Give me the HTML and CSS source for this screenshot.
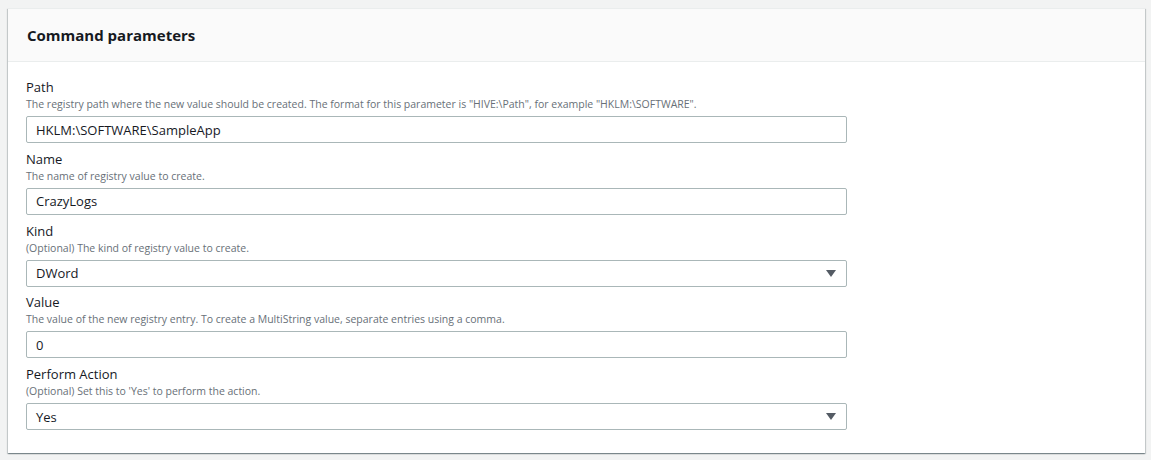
FILE: index.html
```html
<!DOCTYPE html>
<html>
<head>
<meta charset="utf-8">
<link rel="stylesheet" href="styles.css">
</head>
<body>
<div class="card">
  <div class="card-header"><h2 class="title">Command parameters</h2></div>
  <div class="card-body">
    <div class="field">
      <div class="label">Path</div>
      <div class="desc">The registry path where the new value should be created. The format for this parameter is "HIVE:\Path", for example "HKLM:\SOFTWARE".</div>
      <div class="input">HKLM:\SOFTWARE\SampleApp</div>
    </div>
    <div class="field">
      <div class="label">Name</div>
      <div class="desc">The name of registry value to create.</div>
      <div class="input">CrazyLogs</div>
    </div>
    <div class="field">
      <div class="label">Kind</div>
      <div class="desc">(Optional) The kind of registry value to create.</div>
      <div class="input select"><span>DWord</span><svg class="caret" width="10" height="7" viewBox="0 0 10 7"><path d="M0 0H10L5 7Z" fill="#545b64"/></svg></div>
    </div>
    <div class="field">
      <div class="label">Value</div>
      <div class="desc">The value of the new registry entry. To create a MultiString value, separate entries using a comma.</div>
      <div class="input">0</div>
    </div>
    <div class="field">
      <div class="label">Perform Action</div>
      <div class="desc">(Optional) Set this to 'Yes' to perform the action.</div>
      <div class="input select"><span>Yes</span><svg class="caret" width="10" height="7" viewBox="0 0 10 7"><path d="M0 0H10L5 7Z" fill="#545b64"/></svg></div>
    </div>
  </div>
</div>
</body>
</html>
```
FILE: styles.css
```css
html, body {
  margin: 0;
  padding: 0;
  background: #f2f3f3;
}
body {
  padding: 8px 6px 7px 8px;
  font-family: "Open Sans", "Noto Sans", sans-serif;
  color: #16191f;
}
.card {
  background: #ffffff;
  border-top: 1px solid #eaeded;
  box-shadow: 0 1px 1px 0 rgba(0, 28, 36, 0.3), 1px 1px 1px 0 rgba(0, 28, 36, 0.15), -1px 1px 1px 0 rgba(0, 28, 36, 0.15);
}
.card-header {
  background: #fafafa;
  border-bottom: 1px solid #eaeded;
  height: 52px;
  display: flex;
  align-items: center;
  padding: 0 19px;
}
.title {
  margin: 0;
  font-size: 15px;
  font-weight: 700;
  color: #16191f;
}
.card-body {
  padding: 16px 18px 23px 18px;
  display: flex;
  flex-direction: column;
  gap: 6.75px;
}
.field {
  display: flex;
  flex-direction: column;
}
.label {
  font-size: 13px;
  line-height: 18px;
}
.desc {
  font-size: 10.5px;
  line-height: 16px;
  color: #687078;
  margin-bottom: 4px;
}
.input {
  box-sizing: border-box;
  width: 821px;
  height: 27px;
  border: 1px solid #aab7b8;
  border-radius: 2px;
  padding: 0 9px;
  font-size: 13px;
  display: flex;
  align-items: center;
  justify-content: space-between;
  color: #16191f;
}
.caret {
  margin-right: 1px;
}
```
